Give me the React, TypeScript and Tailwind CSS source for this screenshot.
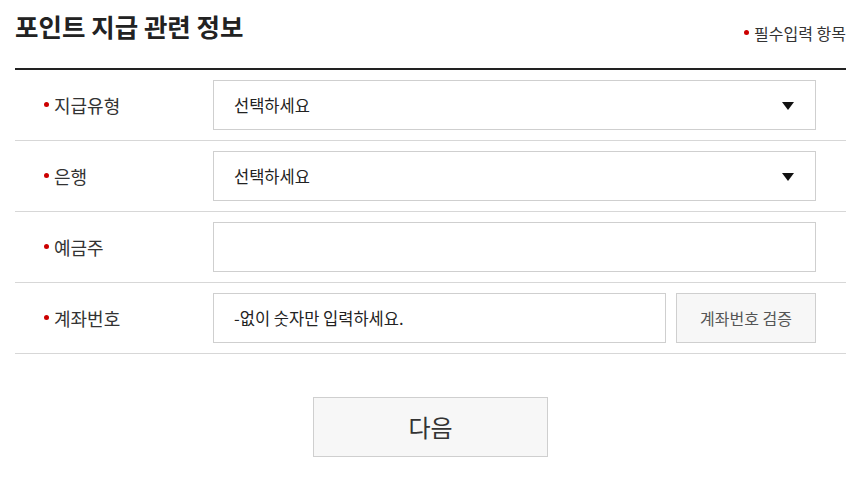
import React from "react";

const font = { fontFamily: '"Noto Sans CJK KR", "Noto Sans", sans-serif' };

function Bullet() {
  return <span className="inline-block w-[5px] h-[5px] rounded-full bg-[#cc0000] mr-[5px] align-middle relative top-[-1px]" />;
}

function Arrow() {
  return (
    <svg width="12" height="8" viewBox="0 0 12 8" className="absolute right-[21px] top-[21px]">
      <path d="M0 0 L12 0 L6 8 Z" fill="#111" />
    </svg>
  );
}

function Row({ label, children }: { label: string; children: React.ReactNode }) {
  return (
    <div className="flex items-center h-[71px] border-b border-[#d7d7d7]">
      <div className="w-[198px] pl-[29px] text-[18px] text-[#333] leading-none flex items-center">
        <Bullet />
        <span>{label}</span>
      </div>
      {children}
    </div>
  );
}

export default function App() {
  return (
    <div className="bg-white w-[868px] h-[491px] pl-[15px] pr-[22px] text-[#222]" style={font}>
      <div className="flex justify-between items-start h-[68px]">
        <div className="pt-[11px] text-[25.5px] font-bold leading-[30px] text-[#222]">포인트 지급 관련 정보</div>
        <div className="pt-[22px] text-[16px] leading-[22px] text-[#333] flex items-center">
          <Bullet />
          <span>필수입력 항목</span>
        </div>
      </div>
      <div className="h-[2px] bg-[#222]" />
      <Row label="지급유형">
        <div className="relative w-[603px] h-[50px] border border-[#cfcfcf] flex items-center pl-[20px] text-[16.5px] text-[#222]">
          선택하세요
          <Arrow />
        </div>
      </Row>
      <Row label="은행">
        <div className="relative w-[603px] h-[50px] border border-[#cfcfcf] flex items-center pl-[20px] text-[16.5px] text-[#222]">
          선택하세요
          <Arrow />
        </div>
      </Row>
      <Row label="예금주">
        <div className="w-[603px] h-[50px] border border-[#cfcfcf]" />
      </Row>
      <Row label="계좌번호">
        <div className="flex gap-[10px]">
          <div className="w-[453px] h-[50px] border border-[#cfcfcf] flex items-center pl-[20px] text-[16.5px] text-[#222]">
            -없이 숫자만 입력하세요.
          </div>
          <div className="w-[140px] h-[50px] border border-[#cfcfcf] bg-[#f7f7f7] flex items-center justify-center text-[16px] text-[#555]">
            계좌번호 검증
          </div>
        </div>
      </Row>
      <div className="flex justify-center pt-[43px]">
        <div className="w-[235px] h-[60px] border border-[#cfcfcf] bg-[#f7f7f7] flex items-center justify-center text-[24px] text-[#333]">
          다음
        </div>
      </div>
    </div>
  );
}
